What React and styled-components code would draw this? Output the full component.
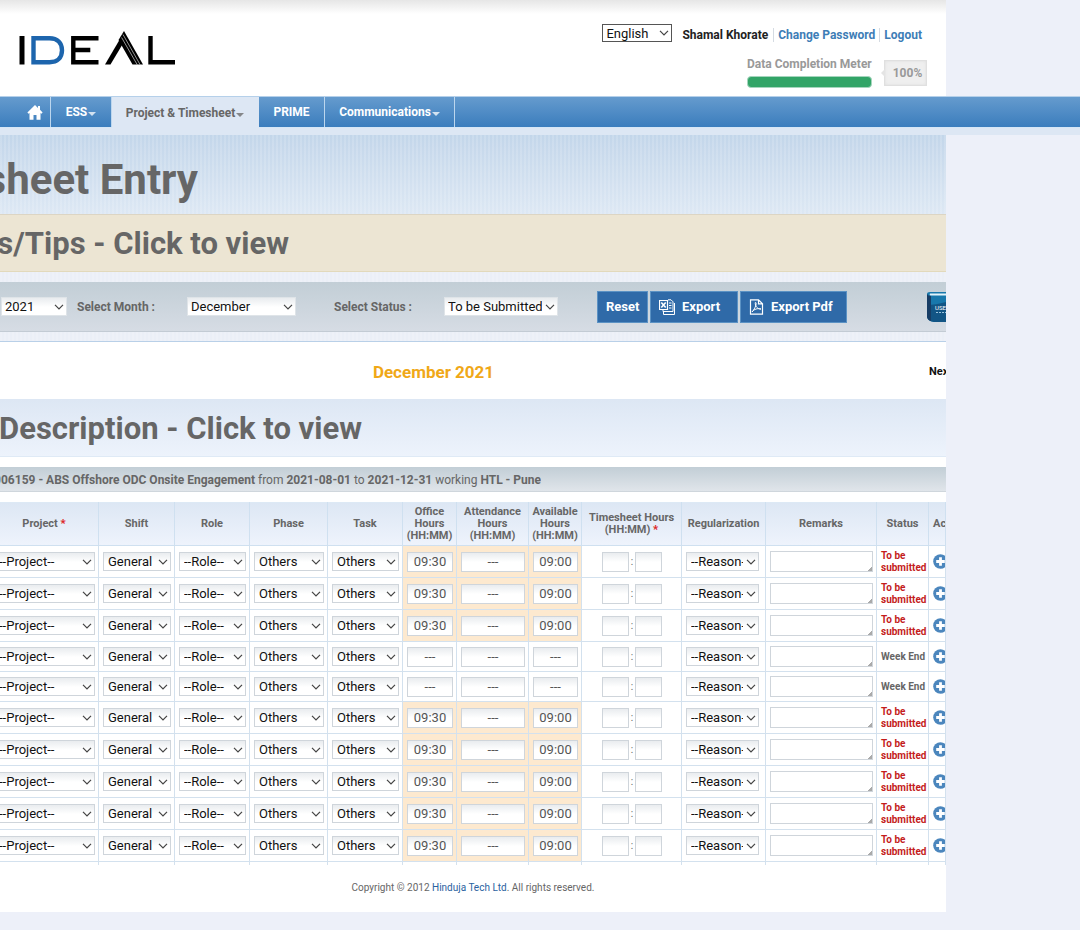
import React from "react";
import styled, { createGlobalStyle, css } from "styled-components";

const Global = createGlobalStyle`
  * { box-sizing: border-box; }
  body { margin: 0; background: #edf0f9; color: #666; font-family: Roboto, "Liberation Sans", sans-serif; font-size: 12px; }
  button, input, select, textarea { font-family: inherit; }
  a { color: #3e7db6; text-decoration: none; }
`;

const stripes = "repeating-linear-gradient(90deg, rgba(255,255,255,0.14) 0 2px, transparent 2px 4px)";
const inset = "linear-gradient(#e9ecef, #fff 9px)";

const Sheet = styled.div`
  margin-right: 134px;
  overflow: hidden;
  background: #fff;
`;

const Header = styled.header`
  display: flex;
  justify-content: space-between;
  height: 96px;
  padding: 23px 19px 0 18px;
  background: linear-gradient(#e6e6e6, #fff 14px);
`;

const Logo = styled.svg`
  margin-top: 7px;
`;

const HeaderSide = styled.div`
  display: flex;
  flex-direction: column;
  align-items: flex-end;
  gap: 14px;
`;

const AccountLine = styled.div`
  display: flex;
  align-items: center;
  height: 20px;
  padding-right: 5px;
  font-weight: 700;
  line-height: 14px;
`;

const UserName = styled.span`
  margin: 4px 5px 0 10px;
  color: #222;
`;

const AccountLink = styled.a`
  margin: 4px 0 0;
  padding: 0 4px;
  border-left: 1px solid #d5dbe2;
  &:last-child { padding-right: 0; }
`;

const MeterLine = styled.div`
  display: flex;
  align-items: flex-start;
  gap: 12px;
`;

const Meter = styled.div`
  width: 125px;
  color: #999;
  font-weight: 700;
  line-height: 15px;
  white-space: nowrap;
`;

const MeterBar = styled.div`
  height: 12px;
  margin-top: 4px;
  border: 1px solid #a5d5bd;
  border-radius: 4px;
  background: #32a467;
`;

const MeterValue = styled.div`
  position: relative;
  width: 43px;
  height: 26px;
  margin-top: 3px;
  border: 1px solid #e0e0e0;
  background: #efefef;
  box-shadow: inset 0 0 3px #ddd;
  color: #999;
  font-weight: 700;
  line-height: 24px;
  text-align: center;
  padding-left: 4px;
  &::before {
    content: "";
    position: absolute;
    left: -4px;
    top: 8px;
    border: 4px solid transparent;
    border-left-width: 0;
    border-right-color: #e4e4e4;
  }
`;

const Nav = styled.nav`
  display: flex;
  height: 32px;
  padding-left: 19px;
  border-top: 1px solid #b5d0ea;
  border-bottom: 1px solid #d5e6f6;
  background: linear-gradient(#659bce, #3b7dbd);
`;

const NavItem = styled.a`
  display: flex;
  align-items: center;
  justify-content: center;
  gap: 1px;
  width: ${(p) => p.$w}px;
  border-right: 1px solid #bcd6ee;
  color: #fff;
  font-weight: 700;
  ${(p) => p.$active && css`
    margin-bottom: -1px;
    background: #dde7f4;
    border-color: #dde7f4;
    color: #666;
  `}
`;

const Caret = styled.i`
  margin-top: 4px;
  border: 4px solid transparent;
  border-top-color: currentColor;
  border-bottom-width: 0;
  opacity: 0.75;
`;

const SubNav = styled.div`
  height: 7px;
  background: #dde7f4;
`;

const Clip = styled.div`
  display: flex;
  justify-content: flex-end;
  width: ${(p) => p.$w}px;
  overflow: hidden;
  white-space: nowrap;
`;

const PageTitle = styled.h1`
  margin: 0;
  height: 79px;
  background: ${stripes}, linear-gradient(#c3d6ea, #dde8f4);
  font-size: 42px;
  line-height: 89px;
`;

const Panel = styled.h2`
  margin: 0;
  height: 58px;
  font-size: 31px;
  line-height: 58px;
  border-top: 1px solid ${(p) => (p.$tips ? "#dcd5c4" : "#dde7f4")};
  border-bottom: 1px solid ${(p) => (p.$tips ? "#e2d9bb" : "#dfeaf6")};
  background: ${(p) => (p.$tips ? "#ece5d3" : "linear-gradient(#dde7f4, #edf3fc)")};
`;

const Gap = styled.div`
  height: ${(p) => p.$h}px;
  background: ${(p) => (p.$striped ? stripes + ", #ebeff7" : "#fff")};
`;

const FilterBar = styled.form`
  display: flex;
  align-items: center;
  height: 50px;
  padding-left: 1px;
  border-bottom: 1px solid #c3cbd4;
  background: linear-gradient(#c2ced6, #d6dce4);
`;

const FilterLabel = styled.label`
  width: ${(p) => p.$w}px;
  flex: none;
  padding-left: ${(p) => p.$pad}px;
  font-weight: 700;
`;

const SelectBox = styled.span`
  display: inline-grid;
  align-items: center;
  vertical-align: middle;
  flex: none;
  width: ${(p) => (p.$w ? p.$w + "px" : "100%")};
  height: ${(p) => p.$h || 19}px;
  border: 1px solid ${(p) => p.$border || "#cfd5db"};
  background: ${(p) => (p.$plain ? "#fff" : inset)};
  select {
    grid-area: 1 / 1;
    width: 100%;
    min-width: 0;
    height: 100%;
    margin: 0;
    padding: 0 15px 0 ${(p) => (p.$border ? 3 : 4)}px;
    border: 0;
    background: transparent;
    appearance: none;
    color: #111;
    font-size: 13px;
  }
  svg { grid-area: 1 / 1; justify-self: end; margin-right: 2px; pointer-events: none; }
`;

function Select({ label, id, value, ...box }) {
  return (
    <SelectBox {...box}>
      <select id={id} aria-label={label} defaultValue={value}><option>{value}</option></select>
      <svg width="10" height="8" viewBox="0 0 10 8" fill="none" stroke="#444" strokeWidth="1.2"><path d="M1 1.8 5 6l4-4.2" /></svg>
    </SelectBox>
  );
}

const Buttons = styled.div`
  display: flex;
  gap: 2px;
  margin-left: 39px;
`;

const ActionButton = styled.button`
  display: flex;
  align-items: center;
  gap: 7px;
  height: 32px;
  width: ${(p) => p.$w}px;
  padding: 0 8px;
  border: 1px solid #5b92c4;
  background: #2f6aa8;
  color: #fff;
  font-size: 13px;
  font-weight: 700;
  white-space: nowrap;
`;

const Guide = styled.a`
  display: block;
  width: 20px;
  height: 32px;
  margin-left: auto;
  overflow: hidden;
`;

const MonthRow = styled.div`
  display: flex;
  align-items: center;
  height: 58px;
  border-top: 1px solid #b9d0e8;
  padding-top: 2px;
`;

const MonthTitle = styled.h3`
  flex: 1;
  margin: 0;
  padding-right: 62px;
  color: #f0a818;
  font-size: 17px;
  text-align: center;
`;

const NextLink = styled.a`
  width: 17px;
  overflow: hidden;
  color: #111;
  font-size: 11px;
  font-weight: 700;
`;

const Assignment = styled.div`
  height: 25px;
  border-bottom: 1px solid #cfd6dc;
  background: linear-gradient(#c2ced6, #e0e5ea);
  line-height: 26px;
`;

const Grid = styled.table`
  width: calc(100% + 11px);
  margin-left: -11px;
  table-layout: fixed;
  border-collapse: collapse;
`;

const HeadCell = styled.th`
  height: 43px;
  padding: 0;
  overflow: hidden;
  border: 1px solid #cfe0f0;
  border-top-color: #dde9f5;
  background: linear-gradient(#dde7f4, #eef3fc);
  background-clip: padding-box;
  font-size: 11px;
  line-height: 12px;
  white-space: nowrap;
  b { color: #d22; }
  span { display: block; }
  &:last-child { padding-left: 4px; text-align: left; }
`;

const Row = styled.tr`
  height: ${(p) => (p.$off ? 30 : 32)}px;
`;

const Cell = styled.td`
  padding: 0 ${(p) => p.$end || 3}px 0 4px;
  overflow: hidden;
  border: 1px solid #d3e1ee;
  background: ${(p) => (p.$warm ? "#fde9cf" : "#fff")};
  line-height: 12px;
  text-align: ${(p) => p.$align || "left"};
  white-space: nowrap;
`;

const TailCell = styled.td`
  height: 3px;
  padding: 0;
  border: 1px solid #d3e1ee;
  border-bottom: 0;
`;

const TimeInput = styled.input`
  display: inline-block;
  vertical-align: middle;
  width: ${(p) => (p.$w ? p.$w + "px" : "100%")};
  height: 20px;
  padding: 0;
  border: 1px solid #cfd5db;
  background: ${inset};
  color: #555;
  font-size: 13px;
  text-align: center;
`;

const Colon = styled.span`
  display: inline-block;
  width: 6px;
  font-size: 10px;
  text-align: center;
  vertical-align: middle;
`;

const Remarks = styled.textarea`
  display: block;
  width: 100%;
  height: 21px;
  padding: 0;
  border: 1px solid #cfd5db;
  background: #fff;
  resize: vertical;
  &::-webkit-resizer { background: linear-gradient(135deg, transparent 84%, #aaa 84%); }
`;

const Status = styled.span`
  display: block;
  color: ${(p) => (p.$off ? "#666" : "#c41c1c")};
  font-size: 10px;
  font-weight: 700;
  span { display: block; }
`;

const AddButton = styled.button`
  display: block;
  width: 15px;
  height: 15px;
  padding: 0;
  border: 0;
  background: none;
`;

const Footer = styled.footer`
  height: 47px;
  padding-top: 16px;
  font-size: 10px;
  line-height: 14px;
  text-align: center;
  a { color: #2a62a0; }
`;

const widths = [109, 76, 75, 78, 75, 54, 72, 53, 100, 84, null, 52, 17];
const heads = ["Project *", "Shift", "Role", "Phase", "Task", "Office|Hours|(HH:MM)", "Attendance|Hours|(HH:MM)", "Available|Hours|(HH:MM)", "Timesheet Hours|(HH:MM) *", "Regularization", "Remarks", "Status", "Act"];
const picks = [["Project", "--Project--"], ["Shift", "General"], ["Role", "--Role--"], ["Phase", "Others"], ["Task", "Others"]];
const days = [0, 0, 0, 1, 1, 0, 0, 0, 0, 0];

function Day({ off, n }) {
  return (
    <Row $off={off}>
      {picks.map(([label, value]) => (
        <Cell key={label}><Select label={`${label} ${n}`} value={value} /></Cell>
      ))}
      <Cell $warm={!off}><TimeInput aria-label={`Office hours ${n}`} readOnly value={off ? "---" : "09:30"} /></Cell>
      <Cell $warm={!off}><TimeInput aria-label={`Attendance hours ${n}`} readOnly value="---" /></Cell>
      <Cell $warm={!off}><TimeInput aria-label={`Available hours ${n}`} readOnly value={off ? "---" : "09:00"} /></Cell>
      <Cell $align="center">
        <TimeInput $w={27} aria-label={`Hours ${n}`} /><Colon>:</Colon><TimeInput $w={27} aria-label={`Minutes ${n}`} />
      </Cell>
      <Cell $end={6}><Select label={`Regularization ${n}`} value="--Reason--" /></Cell>
      <Cell><Remarks aria-label={`Remarks ${n}`} /></Cell>
      <Cell $end={1}>
        <Status $off={off}>{off ? "Week End" : <><span>To be</span><span>submitted</span></>}</Status>
      </Cell>
      <Cell $end={1}>
        <AddButton type="button" aria-label={`Add row ${n}`}>
          <svg width="15" height="15" viewBox="0 0 15 15"><circle cx="7.5" cy="7.5" r="7.3" fill="#4b86bd" /><path d="M7.5 3.2v8.6M3.2 7.5h8.6" stroke="#fff" strokeWidth="2.8" /></svg>
        </AddButton>
      </Cell>
    </Row>
  );
}

function Head({ text }) {
  return (
    <HeadCell scope="col">
      {text.split("|").map((line) => (
        <span key={line}>{line.replace(" *", "")}{line.endsWith("*") && <b> *</b>}</span>
      ))}
    </HeadCell>
  );
}

export default function App() {
  return (
    <>
      <Global />
      <Sheet>
        <Header>
          <Logo width="158" height="36" viewBox="0 0 158 36" role="img" aria-label="IDEAL">
            <path d="M1.5 6h5v28.500h-5z" fill="#000" />
            <path d="M15.500 8.300h16c8 0 12.500 4.500 12.500 11.900s-4.500 12-12.500 12h-16z" fill="none" stroke="#1d65ad" strokeWidth="4.400" />
            <path d="M80.500 8.300H55.300v23.900h25.200M55.300 20h17" fill="none" stroke="#000" strokeWidth="4.400" />
            <path d="M87 34.500 102 9 105 13.500 92.500 34.500z" fill="#000" />
            <path d="M106 1 125 34.500H114.500L100.500 10z" fill="#000" />
            <path d="m103.600 7.500 15.800 27.500M105 4.500l17.300 30.500" stroke="#bbb" strokeWidth=".8" fill="none" />
            <path d="M132.500 6v26.200h24.500" fill="none" stroke="#000" strokeWidth="4.400" />
          </Logo>
          <HeaderSide>
            <AccountLine>
              <Select label="Language" value="English" $w={70} $h={18} $border="#555" $plain />
              <UserName>Shamal Khorate</UserName>
              <AccountLink href="#">Change Password</AccountLink>
              <AccountLink href="#">Logout</AccountLink>
            </AccountLine>
            <MeterLine>
              <Meter>Data Completion Meter<MeterBar /></Meter>
              <MeterValue>100%</MeterValue>
            </MeterLine>
          </HeaderSide>
        </Header>
      </Sheet>
      <Nav>
        <NavItem href="#" $w={32} aria-label="Home">
          <svg width="16" height="15" viewBox="0 0 16 15" fill="#fff"><path d="M8 0 .4 7.400 1.500 8.800 2.500 8v6.800h4V10h3v4.800h4V8l1 .8 1.100-1.400-2.600-2.600V1h-2v1.900z" /></svg>
        </NavItem>
        <NavItem href="#" $w={61}>ESS<Caret /></NavItem>
        <NavItem href="#" $w={147} $active>Project &amp; Timesheet<Caret /></NavItem>
        <NavItem href="#" $w={66}>PRIME</NavItem>
        <NavItem href="#" $w={130}>Communications<Caret /></NavItem>
      </Nav>
      <SubNav />
      <Sheet>
        <PageTitle><Clip $w={198}>sheet Entry</Clip></PageTitle>
        <Panel $tips><Clip $w={289}>s/Tips - Click to view</Clip></Panel>
        <Gap $h={10} $striped />
        <FilterBar>
          <Select label="Year" value="2021" $w={66} $border="#dfe4e8" />
          <FilterLabel htmlFor="month" $w={120} $pad={10}>Select Month :</FilterLabel>
          <Select id="month" value="December" $w={109} $border="#dfe4e8" />
          <FilterLabel htmlFor="status" $w={148} $pad={38}>Select Status :</FilterLabel>
          <Select id="status" value="To be Submitted" $w={114} $border="#dfe4e8" />
          <Buttons>
            <ActionButton type="button" $w={51}>Reset</ActionButton>
            <ActionButton type="button" $w={88}>
              <svg width="16" height="16" viewBox="0 0 16 16" fill="none" stroke="#fff"><path d="M.5 1.500h8v9h-8z" strokeWidth="1.200" /><path d="m2.300 3.500 4.400 5m0-5-4.400 5" strokeWidth="1.600" /><path d="M9 .8h3l2 2v9.700H4V11M15.500 4v11.500H4.500V13M10 4h2.500M10 6.500h2.500M10 9h2.500" /></svg>
              Export
            </ActionButton>
            <ActionButton type="button" $w={107}>
              <svg width="15" height="16" viewBox="0 0 15 16" fill="none" stroke="#fff"><path d="M1.500.8h8l4 4v10.400h-12zM9.500.8v4h4" strokeWidth="1.200" /><path d="M6.300 3.500c1.800-.5.700 5-3.300 9.500 2-3 6-4 9-3-3 .6-6.200-3-5.700-6.500z" /></svg>
              Export Pdf
            </ActionButton>
          </Buttons>
          <Guide href="#" aria-label="User guide">
            <svg width="34" height="32" viewBox="0 0 34 32">
              <path d="M1 3q0-2 3-2h30v30H8q-7-1-7-6z" fill="#1878ac" />
              <path d="M1 14q14 0 33-8v25H8q-7-1-7-6z" fill="#125585" />
              <path d="M1 3v22q0 4 4 5V5q-3 0-4-2z" fill="#173d65" />
              <path d="M4 2.500h30v2H5q-2 0-1-2" fill="#e2f3fa" />
              <text x="9" y="19" fill="#fff" fontSize="6">USER</text>
              <path d="M10 21.500h24" stroke="#9bc4dd" strokeDasharray="2 1" />
            </svg>
          </Guide>
        </FilterBar>
        <Gap $h={9} $striped />
        <MonthRow>
          <MonthTitle>December 2021</MonthTitle>
          <NextLink href="#">Next</NextLink>
        </MonthRow>
        <Panel><Clip $w={362}>Description - Click to view</Clip></Panel>
        <Gap $h={10} />
        <Assignment>
          <Clip $w={541}><span><b>9006159 - ABS Offshore ODC Onsite Engagement</b> from <b>2021-08-01</b> to <b>2021-12-31</b> working <b>HTL - Pune</b></span></Clip>
        </Assignment>
        <Gap $h={10} />
        <Grid>
          <colgroup>{widths.map((w, i) => <col key={i} width={w || undefined} />)}</colgroup>
          <thead>
            <tr>{heads.map((h) => <Head key={h} text={h} />)}</tr>
          </thead>
          <tbody>
            {days.map((off, i) => <Day key={i} off={off} n={i + 1} />)}
            <tr>{heads.map((h) => <TailCell key={h} />)}</tr>
          </tbody>
        </Grid>
        <Footer>Copyright © 2012 <a href="#">Hinduja Tech Ltd</a>. All rights reserved.</Footer>
      </Sheet>
    </>
  );
}
